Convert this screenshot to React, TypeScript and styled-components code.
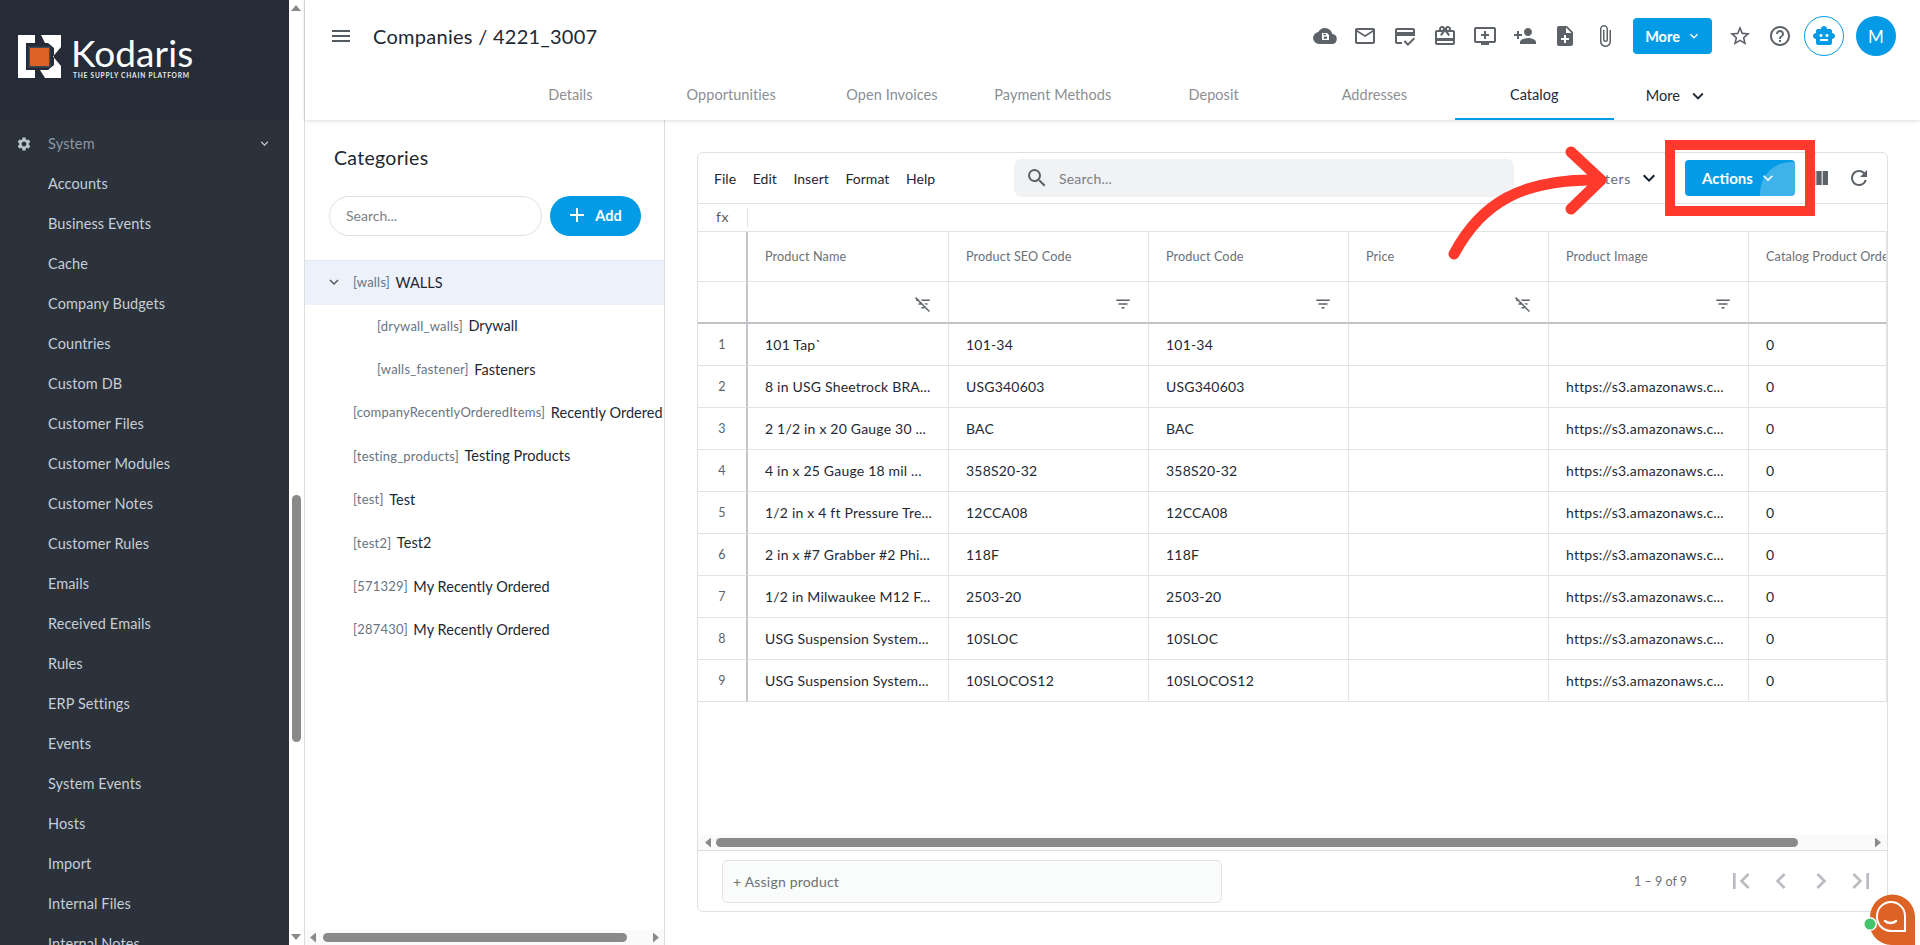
import React from "react";
import styled, { createGlobalStyle } from "styled-components";
import {
  MdMailOutline, MdOutlineCreditScore, MdOutlineCardGiftcard, MdOutlineAddToQueue, MdPersonAdd, MdNoteAdd,
  MdAttachFile, MdStarBorder, MdHelpOutline, MdSmartToy, MdRefresh, MdViewColumn, MdFilterList, MdFilterListOff,
  MdKeyboardArrowDown, MdFirstPage, MdChevronLeft, MdChevronRight, MdLastPage, MdSearch, MdMenu, MdAdd, MdSettings,
} from "react-icons/md";

const Global = createGlobalStyle`
  html, body { margin: 0; padding: 0; background: #fff; overflow: hidden; }
  body { font-family: "Lato", "Noto Sans", sans-serif; }
  * { box-sizing: border-box; }
`;

const BLUE = "#039be5";

const Page = styled.div`
  position: relative; display: flex; width: 1920px; height: 945px; overflow: hidden; background: #fff;
`;

/* ---------- sidebar ---------- */
const Sidebar = styled.aside`
  width: 289px; height: 945px; flex: none; background: #2b323c; overflow: hidden;
`;
const Brand = styled.div`
  height: 120px; background: #252c37; display: flex; align-items: flex-start; gap: 9px; padding: 35px 0 0 18px;
`;
const BrandText = styled.div`
  display: flex; flex-direction: column; color: #fff;
`;
const BrandName = styled.span`
  font-size: 37px; line-height: 36px; font-weight: 400; letter-spacing: 0.1px;
`;
const BrandTag = styled.span`
  font-size: 6.6px; line-height: 8px; font-weight: 700; letter-spacing: 0.78px; white-space: nowrap; margin: 0 0 0 2px; color: #e6e8ea;
`;
const Nav = styled.nav`
  padding-top: 4px;
`;
const NavHead = styled.div`
  height: 40px; display: flex; align-items: center; color: #8b96a3; font-size: 14.5px; padding: 0 0 1px 16px;
  letter-spacing: 0.15px;
  svg:first-child { width: 16px; height: 16px; color: #bcc5cd; margin-right: 16px; }
  span { flex: 1; }
  svg:last-child { width: 15px; height: 15px; color: #c3cbd2; margin-right: 17px; }
`;
const NavItem = styled.div`
  height: 40px; line-height: 40px; padding-left: 48px; color: #c6ced6; font-size: 14.5px; letter-spacing: 0.1px; white-space: nowrap;
`;

const Tri = styled.i<{ $d: "up" | "down" | "left" | "right" }>`
  display: block; flex: none; background: #8a8a8a;
  width: ${(p) => (p.$d === "up" || p.$d === "down" ? "10px" : "6px")};
  height: ${(p) => (p.$d === "up" || p.$d === "down" ? "6px" : "10px")};
  clip-path: ${(p) =>
    ({
      up: "polygon(50% 0,100% 100%,0 100%)",
      down: "polygon(0 0,100% 0,50% 100%)",
      left: "polygon(100% 0,100% 100%,0 50%)",
      right: "polygon(0 0,100% 50%,0 100%)",
    })[p.$d]};
`;
const VRail = styled.div`
  width: 16px; height: 945px; flex: none; border-right: 1px solid #dcdcdc; background: #fff;
  display: flex; flex-direction: column; align-items: center; padding: 5px 1px 5px 0;
`;
const VThumb = styled.div`
  width: 9px; height: 247px; margin: 484px 0 auto; border-radius: 5px; background: #8a8a8a;
`;

/* ---------- main ---------- */
const Main = styled.main`
  flex: 1; min-width: 0; display: flex; flex-direction: column; height: 945px;
`;
const Header = styled.header`
  height: 120px; flex: none; background: #fff; box-shadow: 0 1px 4px rgba(0, 0, 0, 0.14); position: relative; z-index: 1;
`;
const TopRow = styled.div`
  height: 72px; display: flex; align-items: center; padding: 0 24px 0 24px;
`;
const Burger = styled(MdMenu)`
  width: 24px; height: 24px; color: #555b63; margin-right: 20px;
`;
const Title = styled.h1`
  margin: 0 0 1px; flex: 1; font-size: 20px; font-weight: 400; color: #1d2733; letter-spacing: 0.28px;
`;
const HeadIcons = styled.div`
  display: flex; align-items: center; gap: 16px;
`;
const HeadIcon = styled.span`
  width: 24px; height: 24px; display: flex; align-items: center; justify-content: center; color: #5d6269; flex: none;
  svg { width: 24px; height: 24px; }
`;
const HeadBtn = styled.button`
  width: 79px; height: 36px; border: 0; border-radius: 4px; background: ${BLUE}; color: #fff; font: 700 14.5px "Lato", sans-serif;
  display: flex; align-items: center; justify-content: center; gap: 6px; padding: 0 0 0 2px;
  svg { width: 16px; height: 16px; }
`;
const RoundGroup = styled.div`
  display: flex; align-items: center; gap: 12px; margin-left: -4px;
`;
const Robot = styled.div`
  width: 40px; height: 40px; border-radius: 50%; border: 1px solid ${BLUE}; color: ${BLUE};
  display: flex; align-items: center; justify-content: center;
  svg { width: 24px; height: 24px; }
`;
const Avatar = styled.div`
  width: 40px; height: 40px; border-radius: 50%; background: ${BLUE}; color: #fff; font-size: 17px;
  display: flex; align-items: center; justify-content: center;
`;
const Tabs = styled.div`
  height: 48px; display: flex; padding-left: 185px;
`;
const Tab = styled.div<{ $active?: boolean }>`
  width: ${(p) => (p.$active ? "159px" : "160.8px")}; flex: none; display: flex; align-items: center; justify-content: center; font-size: 14.5px; letter-spacing: 0.05px;
  color: ${(p) => (p.$active ? "#222b36" : "#8b8f94")};
  border-bottom: 2px solid ${(p) => (p.$active ? BLUE : "transparent")};
  padding-bottom: 2px;
`;
const TabMore = styled.div`
  display: flex; align-items: center; margin-left: 32px; color: #222b36; font-size: 14.5px; padding-bottom: 2px; gap: 7px;
  svg { width: 22px; height: 22px; margin-top: 2px; }
`;
const Content = styled.div`
  flex: 1; display: flex; min-height: 0;
`;

/* ---------- categories ---------- */
const Panel = styled.section`
  width: 360px; flex: none; border-right: 1px solid #dcdcdc; display: flex; flex-direction: column;
`;
const PanelBody = styled.div`
  flex: 1; min-height: 0; overflow: hidden;
`;
const PanelTitle = styled.h2`
  margin: 0; padding: 25px 0 0 29px; height: 76px; font-size: 19.5px; line-height: 26px; font-weight: 400; color: #1d2733; letter-spacing: 0.3px;
`;
const SearchRow = styled.div`
  display: flex; gap: 8px; padding-left: 24px; height: 64px;
`;
const RoundInput = styled.div`
  width: 213px; height: 40px; border: 1px solid #dfdfdf; border-radius: 20px; padding-left: 16px; line-height: 38px; font-size: 14px; color: #7b8087;
`;
const AddBtn = styled.button`
  width: 91px; height: 40px; border: 0; border-radius: 20px; background: ${BLUE}; color: #fff; font: 700 14.5px "Lato", sans-serif;
  display: flex; align-items: center; justify-content: center; gap: 6px; padding: 0 4px 2px 0;
  svg { width: 24px; height: 24px; }
`;
const TreeRow = styled.div<{ $active?: boolean; $indent?: number }>`
  height: ${(p) => (p.$active ? "45px" : "43.4px")}; display: flex; align-items: center; white-space: nowrap; overflow: hidden;
  padding: 0 0 2px ${(p) => p.$indent ?? 48}px;
  background: ${(p) => (p.$active ? "#edf1fb" : "transparent")};
  ${(p) => (p.$active ? "border-top: 1px solid #e6e9f0;" : "")}
  svg { width: 18px; height: 18px; color: #555b63; margin: 0 10px 0 -28px; }
`;
const TreeCode = styled.span`
  font-size: 13px; color: #687482; margin-right: 5.5px; letter-spacing: 0.2px;
`;
const TreeName = styled.span`
  font-size: 14.5px; color: #1d2733; letter-spacing: 0.05px;
`;
const HRail = styled.div<{ $pad?: string }>`
  height: 15px; flex: 1 0 auto; background: #fafafa; display: flex; align-items: center; padding: ${(p) => p.$pad ?? "0 5px"};
`;
const PanelRail = styled(HRail)`
  flex: none;
`;
const HThumb = styled.div<{ $w: number; $ml: number }>`
  height: 9px; width: ${(p) => p.$w}px; margin-left: ${(p) => p.$ml}px; margin-right: auto; border-radius: 5px; background: #8a8a8a;
`;

/* ---------- card ---------- */
const Workspace = styled.section`
  flex: 1; min-width: 0; padding: 32px 32px 33px 32px;
`;
const Card = styled.div`
  width: 1191px; height: 760px; border: 1px solid #dfdfdf; border-radius: 6px; display: flex; flex-direction: column; overflow: hidden; background: #fff;
`;
const Toolbar = styled.div`
  height: 51px; flex: none; display: flex; align-items: center; padding: 0 16px; border-bottom: 1px solid #e3e3e3;
`;
const Menu = styled.div`
  width: 300px; flex: none; display: flex; gap: 16.5px; font-size: 14px; color: #1d2733; letter-spacing: 0.05px;
`;
const GreySearch = styled.div`
  width: 500px; height: 38px; flex: none; background: #f1f2f4; border-radius: 8px; display: flex; align-items: center; padding-left: 11px; color: #7b8087; font-size: 14px; letter-spacing: 0.2px;
  svg { width: 24px; height: 24px; color: #5d6269; margin-right: 10px; }
`;
const Filters = styled.div`
  margin-left: auto; display: flex; align-items: center; color: #666c74; font-size: 14px; letter-spacing: 0.7px; gap: 6px;
  svg { width: 24px; height: 24px; color: #14202c; }
`;
const ActionBtn = styled.button`
  position: relative; overflow: hidden; width: 110px; height: 36px; margin-left: 24px; border: 0; border-radius: 4px; background: ${BLUE}; color: #fff;
  font: 700 15px "Lato", sans-serif; display: flex; align-items: center; justify-content: center; gap: 5px; padding: 0;
  svg { width: 20px; height: 20px; position: relative; }
`;
const Ripple = styled.span`
  position: absolute; left: 75px; top: 2px; width: 62px; height: 62px; border-radius: 50%; background: rgba(255, 255, 255, 0.23);
`;
const ToolIcon = styled.span<{ $ml: number }>`
  width: 24px; height: 24px; margin-left: ${(p) => p.$ml}px; color: #5d6269; flex: none;
  svg { width: 24px; height: 24px; display: block; }
`;
const FxRow = styled.div`
  height: 28px; flex: none; border-bottom: 1px solid #e3e3e3; display: flex; align-items: center; color: #555b63; font-size: 14px;
`;
const FxCell = styled.div`
  width: 50px; height: 19px; line-height: 18px; text-align: center; border-right: 1px solid #e3e3e3; letter-spacing: 0.5px;
`;
const Table = styled.div`
  flex: 1; min-height: 0; overflow: hidden; display: grid; align-content: start;
  grid-template-columns: 50px 201px 200px 200px 200px 200px 138px;
  grid-template-rows: 50px 42px;
  grid-auto-rows: 42px;
`;
const Cell = styled.div<{ $idx?: boolean }>`
  display: flex; align-items: center; padding-left: 17px; font-size: 14px; color: #1f2933; white-space: nowrap; overflow: hidden;
  border-bottom: 1px solid #e3e3e3; border-right: ${(p) => (p.$idx ? "2px solid #c4c6cc" : "1px solid #e3e3e3")};
  letter-spacing: 0.2px;
  ${(p) => (p.$idx ? "justify-content: center; padding: 0; color: #5d6269; font-size: 12.5px;" : "")}
`;
const HeadCell = styled(Cell)`
  font-size: 12.7px; color: #6c7178; letter-spacing: 0.1px; padding-bottom: 2px;
`;
const FilterCell = styled(Cell)`
  justify-content: flex-end; padding: 3px 16px 0 0; border-bottom: 2px solid #bfc2c7; color: #5d6269;
  svg { width: 18px; height: 18px; }
`;
const TableEnd = styled.div`
  flex: none; height: 20px; display: flex; align-items: flex-end; border-bottom: 1px solid #dfdfdf;
`;
const FooterRow = styled.div`
  flex: none; height: 60px; display: flex; align-items: center; padding: 0 10px 0 24px;
`;
const Assign = styled.div`
  width: 500px; height: 43px; border: 1px solid #e3e3e3; border-radius: 5px; background: #fafbfb; padding-left: 10px; line-height: 41px; font-size: 14px; color: #6c7178; letter-spacing: 0.2px;
`;
const Range = styled.div`
  margin-left: auto; margin-right: 38px; font-size: 12.5px; color: #6c7178;
`;
const Pager = styled.div`
  display: flex; gap: 8px; color: #b9bcc0;
  svg { width: 32px; height: 32px; display: block; }
`;

/* ---------- overlays ---------- */
const RedBox = styled.div`
  position: absolute; left: 1665px; top: 140px; width: 150px; height: 76px; border: 10px solid #ff3a2d; pointer-events: none; z-index: 3;
`;
const ArrowSvg = styled.svg`
  position: absolute; left: 1440px; top: 140px; width: 180px; height: 125px; z-index: 3; pointer-events: none;
`;
const ChatSvg = styled.svg`
  position: absolute; left: 1860px; top: 885px; width: 60px; height: 60px; z-index: 3;
`;

const Logo = () => (
  <svg width="44" height="44" viewBox="18 35 44 44" style={{ flex: "none" }}>
    <path fill="#fff" d="M18 35h17v8h-9v27h9v8H18z" />
    <path fill="#fff" d="M41 35h20v12l-8 9.500 8 9.500v12H45l-5-8h8l6-5V48l-6-5h-3z" />
    <rect x="28.500" y="46.500" width="22" height="21" fill="#3f4754" />
    <rect x="30" y="48" width="19" height="18" fill="#dd6226" />
  </svg>
);

const CloudSave = () => (
  <svg viewBox="0 0 24 24" fill="currentColor">
    <path d="M19.350 10.040A7.490 7.490 0 0 0 12 4a7.500 7.500 0 0 0-6.650 4.040A6 6 0 0 0 6 20h13a5 5 0 0 0 .35-9.960z" />
    <path fill="#fff" d="M9 9h5l2 2v5H9z" />
    <rect x="10.800" y="12.600" width="3.200" height="2.200" fill="#5d6269" />
    <rect x="10.400" y="9.800" width="2.600" height="1.400" fill="#5d6269" />
  </svg>
);

const nav = ["Accounts","Business Events","Cache","Company Budgets","Countries","Custom DB","Customer Files","Customer Modules","Customer Notes","Customer Rules","Emails","Received Emails","Rules","ERP Settings","Events","System Events","Hosts","Import","Internal Files","Internal Notes"];
const tabs = ["Details","Opportunities","Open Invoices","Payment Methods","Deposit","Addresses"];
const tree: [string, string, number?][] = [
  ["drywall_walls","Drywall",72],["walls_fastener","Fasteners",72],["companyRecentlyOrderedItems","Recently Ordered"],
  ["testing_products","Testing Products"],["test","Test"],["test2","Test2"],["571329","My Recently Ordered"],["287430","My Recently Ordered"],
];
const cols = ["Product Name","Product SEO Code","Product Code","Price","Product Image","Catalog Product Order"];
const noFilter = [true,false,false,true,false];
const url = "https://s3.amazonaws.c...";
const rows = [
  ["101 Tap`","101-34","101-34",""],
  ["8 in USG Sheetrock BRA...","USG340603","USG340603",url],
  ["2 1/2 in x 20 Gauge 30 ...","BAC","BAC",url],
  ["4 in x 25 Gauge 18 mil ...","358S20-32","358S20-32",url],
  ["1/2 in x 4 ft Pressure Tre...","12CCA08","12CCA08",url],
  ["2 in x #7 Grabber #2 Phi...","118F","118F",url],
  ["1/2 in Milwaukee M12 F...","2503-20","2503-20",url],
  ["USG Suspension System...","10SLOC","10SLOC",url],
  ["USG Suspension System...","10SLOCOS12","10SLOCOS12",url],
];

export default function App() {
  return (
    <Page>
      <Global />
      <Sidebar>
        <Brand>
          <Logo />
          <BrandText>
            <BrandName>Kodaris</BrandName>
            <BrandTag>THE SUPPLY CHAIN PLATFORM</BrandTag>
          </BrandText>
        </Brand>
        <Nav>
          <NavHead><MdSettings /><span>System</span><MdKeyboardArrowDown /></NavHead>
          {nav.map((n) => <NavItem key={n}>{n}</NavItem>)}
        </Nav>
      </Sidebar>
      <VRail>
        <Tri $d="up" />
        <VThumb />
        <Tri $d="down" />
      </VRail>
      <Main>
        <Header>
          <TopRow>
            <Burger />
            <Title>Companies / 4221_3007</Title>
            <HeadIcons>
              <HeadIcon><CloudSave /></HeadIcon>
              <HeadIcon><MdMailOutline /></HeadIcon>
              <HeadIcon><MdOutlineCreditScore /></HeadIcon>
              <HeadIcon><MdOutlineCardGiftcard /></HeadIcon>
              <HeadIcon><MdOutlineAddToQueue /></HeadIcon>
              <HeadIcon><MdPersonAdd /></HeadIcon>
              <HeadIcon><MdNoteAdd /></HeadIcon>
              <HeadIcon><MdAttachFile /></HeadIcon>
              <HeadBtn>More<MdKeyboardArrowDown /></HeadBtn>
              <HeadIcon><MdStarBorder /></HeadIcon>
              <HeadIcon><MdHelpOutline /></HeadIcon>
              <RoundGroup>
                <Robot><MdSmartToy /></Robot>
                <Avatar>M</Avatar>
              </RoundGroup>
            </HeadIcons>
          </TopRow>
          <Tabs>
            {tabs.map((t) => <Tab key={t}>{t}</Tab>)}
            <Tab $active>Catalog</Tab>
            <TabMore>More<MdKeyboardArrowDown /></TabMore>
          </Tabs>
        </Header>
        <Content>
          <Panel>
            <PanelBody>
              <PanelTitle>Categories</PanelTitle>
              <SearchRow>
                <RoundInput>Search...</RoundInput>
                <AddBtn><MdAdd />Add</AddBtn>
              </SearchRow>
              <TreeRow $active><MdKeyboardArrowDown /><TreeCode>[walls]</TreeCode><TreeName>WALLS</TreeName></TreeRow>
              {tree.map(([c, n, i]) => (
                <TreeRow key={c} $indent={i}><TreeCode>[{c}]</TreeCode><TreeName>{n}</TreeName></TreeRow>
              ))}
            </PanelBody>
            <PanelRail>
              <Tri $d="left" />
              <HThumb $w={304} $ml={7} />
              <Tri $d="right" />
            </PanelRail>
          </Panel>
          <Workspace>
            <Card>
              <Toolbar>
                <Menu><span>File</span><span>Edit</span><span>Insert</span><span>Format</span><span>Help</span></Menu>
                <GreySearch><MdSearch />Search...</GreySearch>
                <Filters>Filters<MdKeyboardArrowDown /></Filters>
                <ActionBtn><Ripple />Actions<MdKeyboardArrowDown /></ActionBtn>
                <ToolIcon $ml={12}><MdViewColumn /></ToolIcon>
                <ToolIcon $ml={16}><MdRefresh /></ToolIcon>
              </Toolbar>
              <FxRow><FxCell>fx</FxCell></FxRow>
              <Table>
                <HeadCell $idx />
                {cols.map((c) => <HeadCell key={c}>{c}</HeadCell>)}
                <FilterCell $idx />
                {cols.map((c, i) => (
                  <FilterCell key={c}>{i < 5 && (noFilter[i] ? <MdFilterListOff /> : <MdFilterList />)}</FilterCell>
                ))}
                {rows.map((r, i) => (
                  <React.Fragment key={i}>
                    <Cell $idx>{i + 1}</Cell>
                    <Cell>{r[0]}</Cell>
                    <Cell>{r[1]}</Cell>
                    <Cell>{r[2]}</Cell>
                    <Cell />
                    <Cell>{r[3]}</Cell>
                    <Cell>0</Cell>
                  </React.Fragment>
                ))}
              </Table>
              <TableEnd>
                <HRail $pad="0 6px 0 7px">
                  <Tri $d="left" />
                  <HThumb $w={1082} $ml={5} />
                  <Tri $d="right" />
                </HRail>
              </TableEnd>
              <FooterRow>
                <Assign>+ Assign product</Assign>
                <Range>1 – 9 of 9</Range>
                <Pager>
                  <MdFirstPage /><MdChevronLeft /><MdChevronRight /><MdLastPage />
                </Pager>
              </FooterRow>
            </Card>
          </Workspace>
        </Content>
      </Main>
      <RedBox />
      <ArrowSvg viewBox="0 0 180 125" fill="none" stroke="#ff3a2d" strokeWidth="11" strokeLinecap="round" strokeLinejoin="round">
        <path d="M14 114C40 65 80 38 160 40" />
        <path d="M131 12 161 40 131 69" />
      </ArrowSvg>
      <ChatSvg viewBox="0 0 60 60">
        <path fill="#dd6226" d="M10 32a22.500 22.500 0 0 1 45 0v28H32A22.500 22.500 0 0 1 10 32z" />
        <path fill="#dd6226" stroke="#fff" strokeWidth="2" d="M17 31a14 14 0 0 1 28 0v15H31a14 14 0 0 1-14-15z" />
        <path fill="none" stroke="#fff" strokeWidth="2.500" strokeLinecap="round" d="M25 36c3 2.500 8 2.500 11 0" />
        <circle cx="10" cy="39" r="7" fill="#fff" />
        <circle cx="10" cy="39" r="5.500" fill="#45c46e" />
      </ChatSvg>
    </Page>
  );
}
